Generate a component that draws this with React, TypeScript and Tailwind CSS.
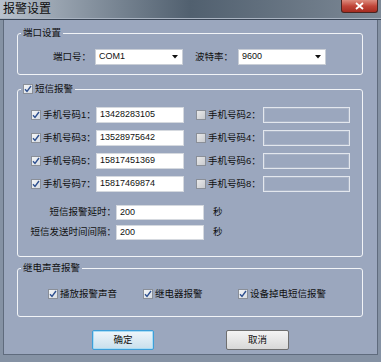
import type { ReactNode } from "react";

const FONT = "font-['Liberation_Sans','Noto_Sans_CJK_SC',sans-serif]";

/** Small Win7-ish checkbox. */
function Check({ checked }: { checked: boolean }) {
  return (
    <span
      className={`flex h-[10px] w-[10px] shrink-0 items-center justify-center border border-[#8a8f98] ${
        checked ? "bg-gradient-to-br from-[#f4f6f8] to-[#d9dde3]" : "bg-gradient-to-br from-[#e9e9e9] to-[#c9cbcf]"
      }`}
    >
      {checked && (
        <svg width="8" height="8" viewBox="0 0 8 8">
          <path d="M1 4.2 L3 6.4 L7 1" fill="none" stroke="#2d4f8f" strokeWidth="1.4" />
        </svg>
      )}
    </span>
  );
}

/** Group box with its caption sitting on the top border. */
function Group({ title, className, children }: { title: ReactNode; className: string; children: ReactNode }) {
  return (
    <div className={`relative mx-[13px] mr-[14px] rounded-[3px] border border-[#f2f4f7] ${className}`}>
      <div className="absolute -top-[8px] left-[3px] flex h-[14px] items-center gap-[2px] bg-[#9ba7be] px-[2px] text-[9.5px] leading-none text-[#111]">
        {title}
      </div>
      {children}
    </div>
  );
}

function Combo({ value }: { value: string }) {
  return (
    <div className="flex h-[16px] w-[88px] items-center justify-between border border-[#c9ced6] bg-white pl-[3px] pr-[4px] text-[9px] text-[#111]">
      <span>{value}</span>
      <svg width="6" height="4" viewBox="0 0 6 4">
        <path d="M0 0 H6 L3 3.5 Z" fill="#111" />
      </svg>
    </div>
  );
}

function TextBox({ value, disabled = false, w = "w-[88px]", h = "h-[16px]" }: { value?: string; disabled?: boolean; w?: string; h?: string }) {
  return (
    <div
      className={`flex ${h} ${w} items-center pl-[3px] text-[9px] text-[#111] ${
        disabled ? "border border-[#e3e7ee] bg-[#9ba7be] shadow-[inset_0_0_0_1px_#aab4c7]" : "border border-[#d5d9df] bg-white"
      }`}
    >
      {value}
    </div>
  );
}

const PHONES: [string, boolean, string, boolean, string][] = [
  ["1", true, "13428283105", false, "2"],
  ["3", true, "13528975642", false, "4"],
  ["5", true, "15817451369", false, "6"],
  ["7", true, "15817469874", false, "8"],
];

export default function App() {
  return (
    <div className={`flex h-[362px] w-[381px] flex-col bg-[#8592a4] ${FONT}`}>
      {/* Title bar */}
      <div className="relative h-[18px] shrink-0 bg-gradient-to-r from-[#b9c2cd] via-[#51606f] to-[#7d8996]">
        <span className="absolute left-[3px] top-[2px] text-[12px] leading-[14px] text-[#0d0d0d]">报警设置</span>
        <div className="absolute right-[3px] top-0 flex h-[13px] w-[37px] items-center justify-center rounded-b-[3px] border border-t-0 border-[#4a2420] bg-gradient-to-b from-[#dc8b7e] via-[#c1463a] to-[#a52b1f]">
          <svg width="9" height="8" viewBox="0 0 9 8">
            <path d="M1 1 L8 7 M8 1 L1 7" stroke="#fff" strokeWidth="1.8" />
          </svg>
        </div>
      </div>
      <div className="h-px shrink-0 bg-[#a9b3c1]" />
      <div className="h-px shrink-0 bg-[#3a4656]" />

      {/* Client area */}
      <div className="mx-[3px] mb-[7px] flex flex-1 flex-col border-x border-b border-[#5f6b7d] bg-[#9ba7be] text-[9.5px] text-[#111]">
        <Group title="端口设置" className="mt-[13px] h-[42px]">
          <div className="flex items-center pl-[12px] pt-[15px]">
            <span className="w-[61px] text-right">端口号：</span>
            <div className="ml-[4px]">
              <Combo value="COM1" />
            </div>
            <span className="w-[50px] text-right">波特率：</span>
            <div className="ml-[5px]">
              <Combo value="9600" />
            </div>
          </div>
        </Group>

        <Group
          title={
            <>
              <Check checked />
              <span>短信报警</span>
            </>
          }
          className="mt-[14px] h-[168px]"
        >
          <div className="flex flex-col gap-[7px] pl-[13px] pt-[17px]">
            {PHONES.map(([a, ca, num, cb, b]) => (
              <div key={a} className="flex h-[16px] items-center">
                <Check checked={ca} />
                <span className="ml-[2px] w-[53px]">手机号码{a}：</span>
                <TextBox value={num} />
                <div className="ml-[12px]">
                  <Check checked={cb} />
                </div>
                <span className="ml-[2px] w-[55px]">手机号码{b}：</span>
                <TextBox disabled w="w-[87px]" />
              </div>
            ))}
          </div>
          <div className="mt-[13px] flex flex-col gap-[5px]">
            {["短信报警延时：", "短信发送时间间隔："].map((l) => (
              <div key={l} className="flex h-[15px] items-center">
                <span className="w-[98px] text-right">{l}</span>
                <TextBox value="200" h="h-[15px]" />
                <span className="ml-[9px]">秒</span>
              </div>
            ))}
          </div>
        </Group>

        <Group title="继电声音报警" className="mt-[11px] h-[49px]">
          <div className="flex h-[14px] items-center pl-[30px] mt-[18px]">
            {["播放报警声音", "继电器报警", "设备掉电短信报警"].map((l) => (
              <div key={l} className="flex w-[95px] items-center gap-[2px]">
                <Check checked />
                <span>{l}</span>
              </div>
            ))}
          </div>
        </Group>

        <div className="mt-[13px] flex pl-[88px]">
          <button className="flex h-[20px] w-[62px] items-center justify-center rounded-[2px] border border-[#3d9fd9] bg-gradient-to-b from-[#eef6fb] to-[#c9dfec] text-[9.5px] shadow-[inset_0_0_0_1px_#a8dcf5]">
            确定
          </button>
          <button className="ml-[72px] flex h-[20px] w-[63px] items-center justify-center rounded-[2px] border border-[#6f6f6f] bg-gradient-to-b from-[#f4f4f4] to-[#d8d8d8] text-[9.5px]">
            取消
          </button>
        </div>
      </div>
    </div>
  );
}
